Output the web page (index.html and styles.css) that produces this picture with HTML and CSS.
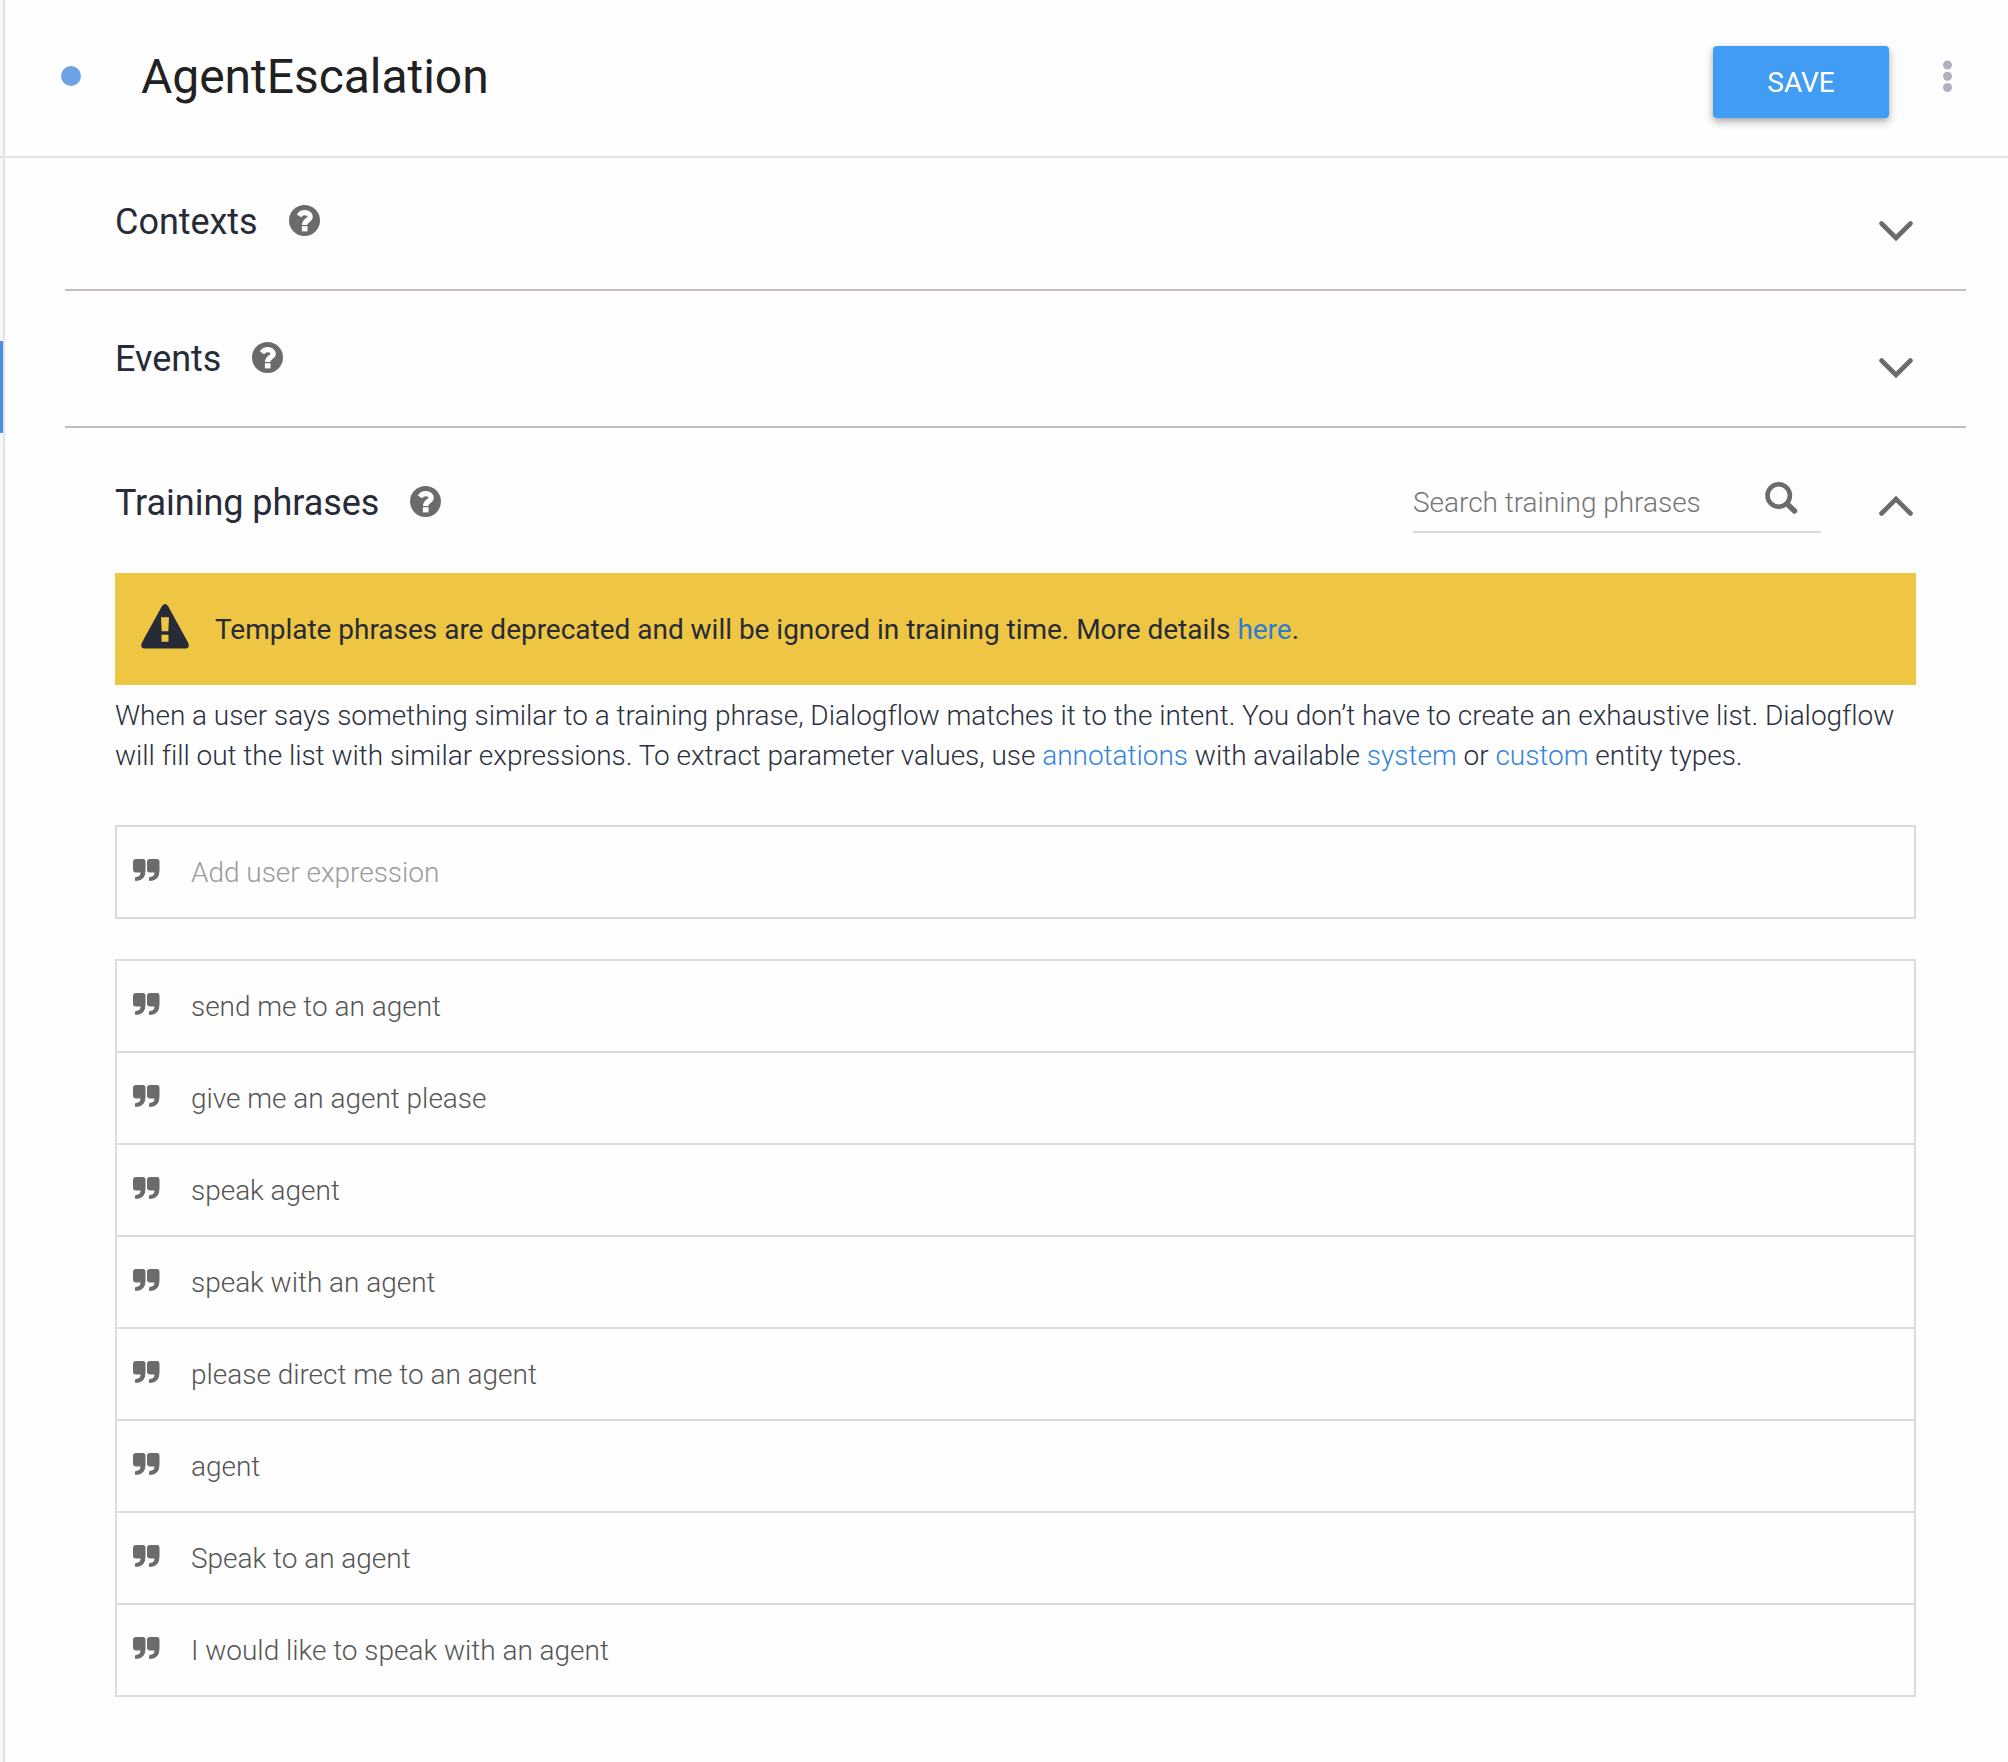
FILE: index.html
```html
<!DOCTYPE html>
<html lang="en">
<head>
<meta charset="utf-8">
<title>AgentEscalation</title>
<link rel="stylesheet" href="styles.css">
</head>
<body>
<svg class="defs" aria-hidden="true">
  <symbol id="help" viewBox="0 0 31 31"><circle cx="15.5" cy="15.5" r="15.5" fill="#6b6b6b"/><path d="M10 10.800C11.400 8.600 13.200 7.600 15.800 7.600C18.900 7.600 21.200 9.300 21.200 11.700C21.200 15.300 15.600 15.200 15.600 20" fill="none" stroke="#fff" stroke-width="5.200"/><path d="M12.900 21.200h5.600v5.200h-5.600z" fill="#fff"/></symbol>
  <symbol id="chevron" viewBox="0 0 36 22"><path d="M3.500 3.500L18 18L32.500 3.500" fill="none" stroke="#6b6b6b" stroke-width="4.600" stroke-linecap="round"/></symbol>
  <symbol id="quote" viewBox="0 0 27 22"><path id="mark" d="M3 0h7q2.5 0 2.5 3v8.500q0 10.500-9.500 10.500q-1 0-1-1v-2q0-1 1-1q4.500-.5 4.500-4.500h-4.500q-3 0-3-3v-7.500q0-3 3-3z" fill="#6b6b6b"/><use href="#mark" x="14"/></symbol>
</svg>
<div class="app">
  <aside class="rail"><div class="rail-head"></div><div class="rail-active"></div></aside>
  <main class="main">
    <header class="header">
      <span class="dot"></span>
      <h1 class="title">AgentEscalation</h1>
      <button class="save">SAVE</button>
      <svg class="more" width="9" height="32" viewBox="0 0 9 32" fill="#b0b0be"><circle cx="4.5" cy="5" r="4.500"/><circle cx="4.500" cy="16.300" r="4.500"/><circle cx="4.500" cy="27.500" r="4.500"/></svg>
    </header>
    <section class="section contexts">
      <h2>Contexts</h2><svg class="help"><use href="#help"/></svg>
      <svg class="chevron"><use href="#chevron"/></svg>
    </section>
    <section class="section events">
      <h2>Events</h2><svg class="help"><use href="#help"/></svg>
      <svg class="chevron"><use href="#chevron"/></svg>
    </section>
    <section class="training">
      <div class="training-head">
        <h2>Training phrases</h2><svg class="help"><use href="#help"/></svg>
        <div class="search"><span>Search training phrases</span>
          <svg width="33" height="33" viewBox="0 0 33 33" fill="none" stroke="#6b6b6b"><circle cx="13.700" cy="13.500" r="11.200" stroke-width="4.600"/><path d="M22.500 22.300L29.500 29" stroke-width="5.400" stroke-linecap="round"/></svg>
        </div>
        <svg class="chevron up"><use href="#chevron"/></svg>
      </div>
      <div class="banner">
        <svg width="48" height="45" viewBox="0 0 48 45"><path d="M21 2Q24-2 27 2L47.300 39Q49 44 44.500 44.500H3.500Q-1 44 .7 39Z" fill="#272b37"/><path d="M20 13.200h8l-.7 14h-6.600zM20.500 30.800h7v7h-7z" fill="#eec643"/></svg>
        <p>Template phrases are deprecated and will be ignored in training time. More details <a>here</a>.</p>
      </div>
      <p class="intro">When a user says something similar to a training phrase, Dialogflow matches it to the intent. You don’t have to create an exhaustive list. Dialogflow<br>will fill out the list with similar expressions. To extract parameter values, use <a>annotations</a> with available <a>system</a> or <a>custom</a> entity types.</p>
      <div class="list add"><div class="row"><svg><use href="#quote"/></svg><span>Add user expression</span></div></div>
      <div class="list">
        <div class="row"><svg><use href="#quote"/></svg><span>send me to an agent</span></div>
        <div class="row"><svg><use href="#quote"/></svg><span>give me an agent please</span></div>
        <div class="row"><svg><use href="#quote"/></svg><span>speak agent</span></div>
        <div class="row"><svg><use href="#quote"/></svg><span>speak with an agent</span></div>
        <div class="row"><svg><use href="#quote"/></svg><span>please direct me to an agent</span></div>
        <div class="row"><svg><use href="#quote"/></svg><span>agent</span></div>
        <div class="row"><svg><use href="#quote"/></svg><span>Speak to an agent</span></div>
        <div class="row"><svg><use href="#quote"/></svg><span>I would like to speak with an agent</span></div>
      </div>
    </section>
  </main>
</div>
</body>
</html>
```
FILE: styles.css
```css
* { box-sizing: border-box; margin: 0; padding: 0; }
body { background: #fefefe; font-family: Roboto, "Liberation Sans", sans-serif; font-size: 28px; font-weight: 300; color: #2b3040; }
svg { display: block; flex: none; }
.defs { width: 0; height: 0; position: absolute; }
.app { display: flex; height: 1762px; }
.rail { width: 5px; background: #f6f6f6; border-right: 2px solid #e2e2e2; }
.rail-head { height: 158px; border-bottom: 2px solid #e2e2e2; margin-bottom: 183px; }
.rail-active { height: 92px; background: #4a90e2; }
.main { flex: 1; }
.header { display: flex; align-items: flex-start; height: 158px; border-bottom: 2px solid #e2e2e2; padding: 46px 56px 0 56px; }
.dot { width: 20px; height: 20px; border-radius: 50%; background: #6ba3e5; margin-top: 20px; }
.title { font-size: 48px; font-weight: 400; line-height: 62px; letter-spacing: -.04px; color: #212121; margin-left: 60px; }
.save { margin-left: auto; width: 176px; height: 72px; padding-top: 1px; border: 0; border-radius: 4px; background: #419cf4; color: #fff; font: 400 28px/71px Roboto, sans-serif; box-shadow: 0 4px 10px rgba(0, 0, 0, .28), 0 2px 4px rgba(0, 0, 0, .12); }
.more { margin: 14px 0 0 54px; }
h2 { font-size: 36px; font-weight: 400; line-height: 44px; letter-spacing: -.04px; color: #272b37; }
.help { width: 31px; height: 31px; margin-left: 31px; }
.chevron { width: 36px; height: 22px; margin-left: auto; }
.section { display: flex; align-items: flex-start; margin: 0 42px 0 60px; padding: 42px 52px 0 50px; border-bottom: 2px solid #c5bcbf; }
.contexts { height: 133px; }
.events { height: 137px; padding-top: 46px; }
.section .help { margin-top: 5px; }
.section .chevron { margin-top: 20px; }
.training { margin: 0 92px 0 110px; }
.training-head { display: flex; align-items: flex-start; height: 145px; padding: 53px 2px 0 0; }
.training-head .help { margin-top: 5px; }
.search { display: flex; justify-content: space-between; width: 408px; height: 52px; border-bottom: 2px solid #dbdbdb; margin-left: auto; padding-right: 23px; color: #757575; line-height: 44px; letter-spacing: -.02px; }
.search svg { margin-top: 1px; }
.training-head .chevron { margin: 14px 0 0 57px; }
.up { transform: rotate(180deg); }
.banner { height: 112px; background: #eec643; padding: 31px 26px; display: flex; gap: 26px; font-weight: 400; color: #272b37; line-height: 52px; letter-spacing: -.018px; }
a { color: #3584dc; }
.banner a { color: #2f7dd0; }
.intro { line-height: 40px; padding-top: 11px; height: 140px; white-space: nowrap; letter-spacing: -.026px; font-variant-ligatures: common-ligatures; }
.list { border: 2px solid #dbdbdb; color: #555; letter-spacing: -.025px; }
.add { margin-bottom: 40px; color: #9b9b9b; }
.row { display: flex; align-items: flex-start; height: 92px; padding: 32px 16px 0; border-bottom: 2px solid #dbdbdb; }
.row:last-child { border-bottom: 0; height: 90px; }
.row svg { width: 27px; height: 22px; }
.row span { margin-left: 31px; line-height: 28px; }
```
